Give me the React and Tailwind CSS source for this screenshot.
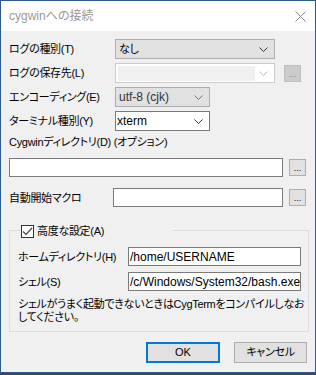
const font = { fontFamily: '"Liberation Sans", "Noto Sans CJK JP", sans-serif' };

const Chevron = ({ color = '#333' }) => (
  <svg width="9" height="5" viewBox="0 0 9 5" fill="none">
    <polyline points="0.5,0.5 4.5,4.5 8.5,0.5" stroke={color} strokeWidth="1" />
  </svg>
);

const Dots = ({ disabled }) => (
  <button
    className={`w-[17px] h-[17px] shrink-0 border text-[9px] leading-[10px] tracking-normal flex items-end justify-center pb-[2px] ${
      disabled ? 'bg-[#cccccc] border-[#bfbfbf] text-[#838383]' : 'bg-[#e1e1e1] border-[#adadad] text-black'
    }`}
  >
    ...
  </button>
);

const App = () => {
  return (
    <div className="w-[316px] h-[375px] bg-[#3a4757] text-[11px] tracking-[-0.3px] text-black whitespace-nowrap [font-feature-settings:'palt']" style={font}>
      <div className="w-[316px] h-[373px] border border-[#2b5a8f] bg-[#f0f0f0] flex flex-col">
        {/* title bar */}
        <div className="h-[30px] bg-white flex items-center justify-between pl-[8px] pr-[9px] shrink-0">
          <span className="text-[#999999] text-[12px] tracking-normal">cygwinへの接続</span>
          <svg width="11" height="11" viewBox="0 0 11 11">
            <path d="M0.5 0.5 L10.5 10.5 M10.5 0.5 L0.5 10.5" stroke="#8a8a8a" strokeWidth="1" />
          </svg>
        </div>

        <div className="flex flex-col pl-[8px]">
          <div className="flex items-center mt-[8px] h-[20px]">
            <span className="w-[106px] leading-[14px]">ログの種別(T)</span>
            <div className="w-[160px] h-[20px] bg-[#e1e1e1] border border-[#adadad] flex items-center justify-between pl-[3px] pr-[6px]">
              <span>なし</span>
              <Chevron />
            </div>
          </div>

          <div className="flex items-center mt-[4px] h-[20px]">
            <span className="w-[106px] leading-[14px]">ログの保存先(L)</span>
            <div className="w-[160px] h-[20px] bg-white border border-[#cccccc] flex items-center justify-between pl-[2px] pr-[6px]">
              <div className="w-[137px] h-[15px] bg-[#f0f0f0]" />
              <Chevron color="#bfbfbf" />
            </div>
            <div className="ml-[9px] flex items-center">
              <Dots disabled />
            </div>
          </div>

          <div className="flex items-center mt-[4px] h-[20px]">
            <span className="w-[106px] leading-[14px]">エンコーディング(E)</span>
            <div className="w-[95px] h-[20px] bg-[#e1e1e1] border border-[#adadad] flex items-center justify-between pl-[3px] pr-[6px]">
              <span className="text-[#333] text-[12px] tracking-normal">utf-8 (cjk)</span>
              <Chevron color="#777" />
            </div>
          </div>

          <div className="flex items-center mt-[4px] h-[20px]">
            <span className="w-[106px] leading-[14px]">ターミナル種別(Y)</span>
            <div className="w-[95px] h-[20px] bg-white border border-[#7a7a7a] flex items-center justify-between pl-[1px] pr-[6px]">
              <span className="text-[12px] tracking-normal">xterm</span>
              <Chevron />
            </div>
          </div>

          <div className="mt-[4px] leading-[14px]">Cygwinディレクトリ(D) (オプション)</div>

          <div className="flex items-center mt-[9px] h-[19px]">
            <div className="w-[274px] h-[19px] bg-white border border-[#7a7a7a]" />
            <div className="ml-[6px]">
              <Dots />
            </div>
          </div>

          <div className="flex items-center mt-[11px] h-[19px]">
            <span className="w-[104px] leading-[14px]">自動開始マクロ</span>
            <div className="w-[170px] h-[19px] bg-white border border-[#7a7a7a]" />
            <div className="ml-[6px]">
              <Dots />
            </div>
          </div>

          {/* group box */}
          <div className="relative w-[300px] mt-[23px] border border-[#dcdcdc] pl-[8px] pr-[6px] pt-[16px] pb-[7px]">
            <div className="absolute left-[11px] top-[-7px] w-[152px] h-[14px] bg-[#f0f0f0] flex items-center">
              <div className="w-[13px] h-[13px] bg-white border border-[#333] flex items-center justify-center">
                <svg width="11" height="9" viewBox="0 0 11 9" fill="none">
                  <polyline points="1,4.5 4,7.5 10,1" stroke="#444" strokeWidth="1.2" />
                </svg>
              </div>
              <span className="ml-[3px] leading-[14px]">高度な設定(A)</span>
            </div>

            <div className="flex items-center h-[19px]">
              <span className="w-[110px] leading-[14px]">ホームディレクトリ(H)</span>
              <div className="w-[173px] h-[19px] bg-white border border-[#7a7a7a] flex items-center pl-[1px] text-[12px] tracking-normal">
                /home/USERNAME
              </div>
            </div>
            <div className="flex items-center h-[19px] mt-[6px]">
              <span className="w-[110px] leading-[14px]">シェル(S)</span>
              <div className="w-[173px] h-[19px] bg-white border border-[#7a7a7a] flex items-center pl-[1px] overflow-hidden text-[12px] tracking-normal">
                /c/Windows/System32/bash.exe
              </div>
            </div>
            <p className="mt-[7px] leading-[13px]">
              シェルがうまく起動できないときはCygTermをコンパイルしなお
              <br />
              してください。
            </p>
          </div>

          <div className="flex justify-end gap-[14px] pr-[8px] mt-[10px]">
            <button className="w-[74px] h-[21px] bg-[#e1e1e1] border-2 border-[#0078d7] flex items-center justify-center tracking-normal">
              OK
            </button>
            <button className="w-[73px] h-[21px] bg-[#e1e1e1] border border-[#adadad] flex items-center justify-center">
              キャンセル
            </button>
          </div>
        </div>
      </div>
    </div>
  );
};

export default App;
